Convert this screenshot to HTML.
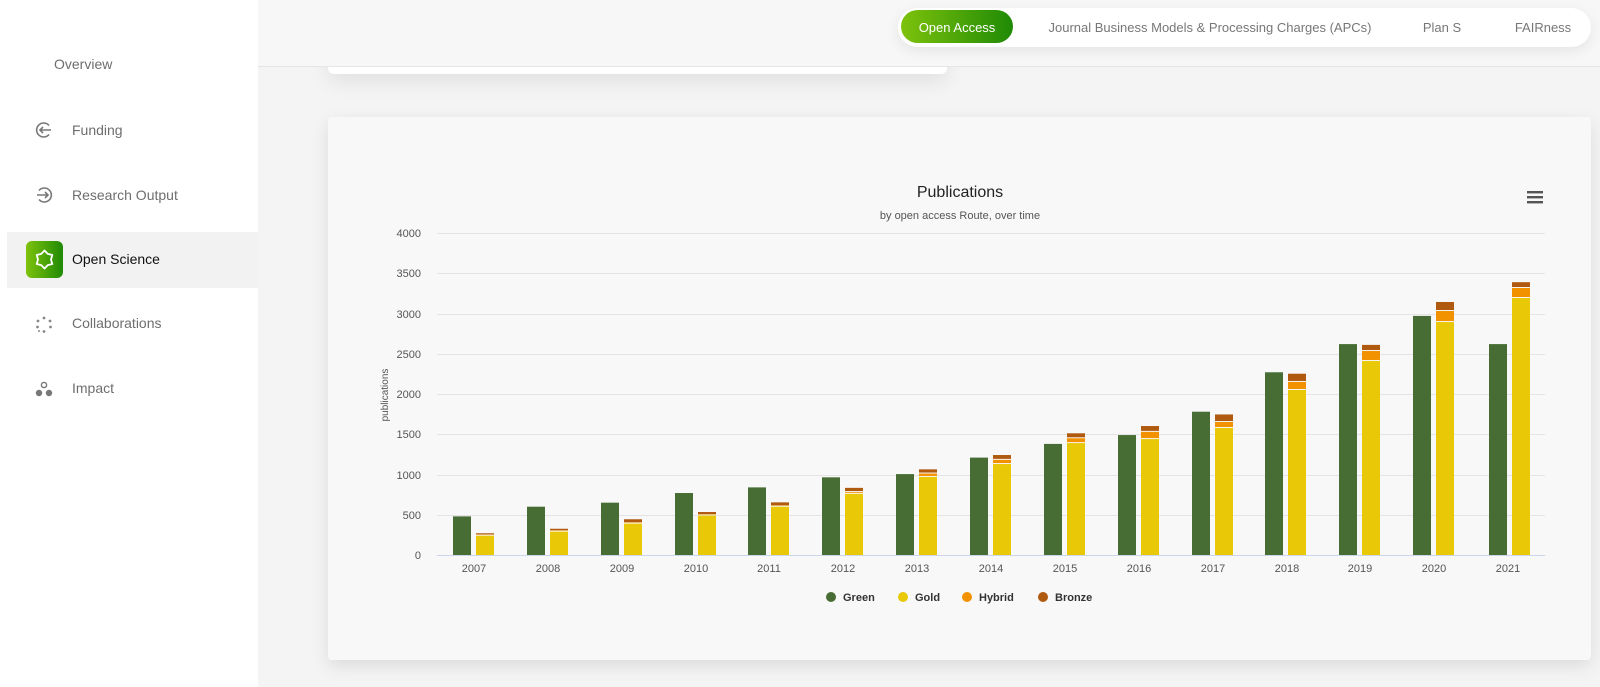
<!DOCTYPE html>
<html><head><meta charset="utf-8"><style>
*{margin:0;padding:0;box-sizing:border-box}
body{width:1600px;height:687px;overflow:hidden;background:#f4f4f4;font-family:"Liberation Sans",sans-serif;position:relative}
.side{position:absolute;left:0;top:0;width:258px;height:687px;background:#fff;z-index:3}
.item{position:absolute;left:72px;font-size:14px;color:#6e6e6e}
.ico{position:absolute;left:34px;width:20px;height:20px}
.hl{position:absolute;left:7px;top:232px;width:251px;height:56px;background:#f2f2f2}
.gicon{position:absolute;left:26px;top:241px;width:37px;height:37px;border-radius:6px;background:linear-gradient(90deg,#7ec20c,#1f8a05)}
.top{position:absolute;left:258px;top:0;width:1342px;height:67px;background:#f7f7f7;border-bottom:1px solid #e6e6e6;z-index:2}
.topcard{position:absolute;left:328px;top:0;width:619px;height:74px;background:#fff;border-radius:0 0 6px 6px;box-shadow:0 8px 20px rgba(0,0,0,.08);z-index:1}
.pill{position:absolute;left:898px;top:8px;width:693px;height:39px;background:#fff;border-radius:20px;box-shadow:0 4px 14px rgba(0,0,0,.08);z-index:3}
.pill span{position:absolute;top:12px;font-size:13px;color:#777;white-space:nowrap;transform:translateX(-50%)}
.oa{position:absolute;left:3px;top:2px;width:112px;height:33px;border-radius:17px;background:linear-gradient(90deg,#7ec20c,#1f8a05)}
.card{position:absolute;left:328px;top:117px;width:1263px;height:543px;background:#f8f8f8;border-radius:4px;box-shadow:0 6px 18px rgba(0,0,0,.1)}
</style></head><body>
<div class="top"></div>
<div class="topcard"></div>
<div class="pill">
 <div class="oa"></div>
 <span style="left:59px;color:#fff">Open Access</span>
 <span style="left:312px">Journal Business Models &amp; Processing Charges (APCs)</span>
 <span style="left:544px">Plan S</span>
 <span style="left:645px">FAIRness</span>
</div>
<div class="side">
 <div class="item" style="left:54px;top:56px">Overview</div>
 <svg class="ico" style="top:120px" viewBox="0 0 20 20" fill="none" stroke="#777" stroke-width="1.6"><path d="M15 5.5A7 7 0 1 0 15 14.5"/><path d="M17 10H6M9 7l-3 3 3 3"/></svg>
 <div class="item" style="top:122px">Funding</div>
 <svg class="ico" style="top:185px" viewBox="0 0 20 20" fill="none" stroke="#777" stroke-width="1.6"><path d="M5 5.5A7 7 0 1 1 5 14.5"/><path d="M3 10h11M11 7l3 3-3 3"/></svg>
 <div class="item" style="top:187px">Research Output</div>
 <div class="hl"></div>
 <div class="gicon"><svg width="37" height="37" viewBox="0 0 37 37" fill="none" stroke="#fff" stroke-width="1.8" stroke-linejoin="round"><path d="M18.5 9.5L21.75 12.87 26.3 14 25 18.5 26.3 23 21.75 24.13 18.5 27.5 15.25 24.13 10.7 23 12 18.5 10.7 14 15.25 12.87Z"/></svg></div>
 <div class="item" style="top:251px;color:#111">Open Science</div>
 <svg class="ico" style="top:315px" viewBox="0 0 20 20" fill="#888"><circle cx="10" cy="3" r="1.4"/><circle cx="4" cy="6" r="1.4"/><circle cx="16" cy="6" r="1.4"/><circle cx="3.5" cy="12" r="1.4"/><circle cx="16.5" cy="12" r="1.4"/><circle cx="10" cy="16.5" r="1.4"/><circle cx="5" cy="16" r="1"/></svg>
 <div class="item" style="top:315px">Collaborations</div>
 <svg class="ico" style="top:380px" viewBox="0 0 20 20"><circle cx="10" cy="5" r="2.6" fill="none" stroke="#777" stroke-width="1.4"/><circle cx="5" cy="13" r="3.2" fill="#777"/><circle cx="15" cy="13" r="3.2" fill="#777"/></svg>
 <div class="item" style="top:380px">Impact</div>
</div>
<div class="card"></div>
<svg style="position:absolute;left:0;top:0" width="1600" height="687" font-family="Liberation Sans, sans-serif">
 <text x="960" y="197" text-anchor="middle" font-size="16" fill="#222">Publications</text>
 <text x="960" y="219" text-anchor="middle" font-size="11" fill="#555">by open access Route, over time</text>
 <g fill="#555"><rect x="1527" y="191" width="16" height="2.4"/><rect x="1527" y="196" width="16" height="2.4"/><rect x="1527" y="201" width="16" height="2.4"/></g>
 <g stroke="#e4e4e4" stroke-width="1">
  <line x1="437" x2="1545" y1="233.5" y2="233.5"/><line x1="437" x2="1545" y1="273.5" y2="273.5"/><line x1="437" x2="1545" y1="314.5" y2="314.5"/><line x1="437" x2="1545" y1="354.5" y2="354.5"/><line x1="437" x2="1545" y1="394.5" y2="394.5"/><line x1="437" x2="1545" y1="434.5" y2="434.5"/><line x1="437" x2="1545" y1="475.5" y2="475.5"/><line x1="437" x2="1545" y1="515.5" y2="515.5"/>
 </g>
 <line x1="437" x2="1545" y1="555.5" y2="555.5" stroke="#ccd6eb"/>
 <g font-size="11" fill="#555" text-anchor="end">
  <text x="421" y="237">4000</text><text x="421" y="277">3500</text><text x="421" y="318">3000</text><text x="421" y="358">2500</text><text x="421" y="398">2000</text><text x="421" y="438">1500</text><text x="421" y="479">1000</text><text x="421" y="519">500</text><text x="421" y="559">0</text>
 </g>
 <text transform="translate(388,395) rotate(-90)" text-anchor="middle" font-size="10" fill="#555">publications</text>
 <g font-size="11" fill="#555" text-anchor="middle">
  <text x="474" y="572">2007</text><text x="548" y="572">2008</text><text x="622" y="572">2009</text><text x="696" y="572">2010</text><text x="769" y="572">2011</text><text x="843" y="572">2012</text><text x="917" y="572">2013</text><text x="991" y="572">2014</text><text x="1065" y="572">2015</text><text x="1139" y="572">2016</text><text x="1213" y="572">2017</text><text x="1287" y="572">2018</text><text x="1360" y="572">2019</text><text x="1434" y="572">2020</text><text x="1508" y="572">2021</text>
 </g>
 <g transform="translate(0,555) scale(1,-0.0805)">
  <g fill="#486d34">
   <rect x="453" y="0" width="18" height="480"/><rect x="527" y="0" width="18" height="600"/><rect x="601" y="0" width="18" height="650"/><rect x="675" y="0" width="18" height="770"/><rect x="748" y="0" width="18" height="840"/><rect x="822" y="0" width="18" height="965"/><rect x="896" y="0" width="18" height="1005"/><rect x="970" y="0" width="18" height="1210"/><rect x="1044" y="0" width="18" height="1380"/><rect x="1118" y="0" width="18" height="1490"/><rect x="1192" y="0" width="18" height="1780"/><rect x="1265" y="0" width="18" height="2270"/><rect x="1339" y="0" width="18" height="2620"/><rect x="1413" y="0" width="18" height="2970"/><rect x="1489" y="0" width="18" height="2620"/>
  </g>
  <g fill="#e9c808">
   <rect x="476" y="0" width="18" height="240"/><rect x="550" y="0" width="18" height="290"/><rect x="624" y="0" width="18" height="390"/><rect x="698" y="0" width="18" height="490"/><rect x="771" y="0" width="18" height="600"/><rect x="845" y="0" width="18" height="760"/><rect x="919" y="0" width="18" height="970"/><rect x="993" y="0" width="18" height="1130"/><rect x="1067" y="0" width="18" height="1390"/><rect x="1141" y="0" width="18" height="1440"/><rect x="1215" y="0" width="18" height="1578"/><rect x="1288" y="0" width="18" height="2050"/><rect x="1362" y="0" width="18" height="2410"/><rect x="1436" y="0" width="18" height="2894"/><rect x="1512" y="0" width="18" height="3193"/>
  </g>
  <g fill="#f39200">
   <rect x="476" y="252" width="18" height="4"/><rect x="550" y="302" width="18" height="6"/><rect x="624" y="402" width="18" height="6"/><rect x="698" y="502" width="18" height="6"/><rect x="771" y="612" width="18" height="6"/><rect x="845" y="772" width="18" height="10"/><rect x="919" y="982" width="18" height="30"/><rect x="993" y="1142" width="18" height="40"/><rect x="1067" y="1402" width="18" height="48"/><rect x="1141" y="1452" width="18" height="78"/><rect x="1215" y="1590" width="18" height="62"/><rect x="1288" y="2062" width="18" height="88"/><rect x="1362" y="2422" width="18" height="112"/><rect x="1436" y="2906" width="18" height="125"/><rect x="1512" y="3205" width="18" height="112"/>
  </g>
  <g fill="#b05a10">
   <rect x="476" y="256" width="18" height="14"/><rect x="550" y="308" width="18" height="18"/><rect x="624" y="408" width="18" height="36"/><rect x="698" y="508" width="18" height="26"/><rect x="771" y="618" width="18" height="36"/><rect x="845" y="794" width="18" height="40"/><rect x="919" y="1024" width="18" height="40"/><rect x="993" y="1194" width="18" height="48"/><rect x="1067" y="1462" width="18" height="50"/><rect x="1141" y="1542" width="18" height="60"/><rect x="1215" y="1664" width="18" height="82"/><rect x="1288" y="2162" width="18" height="90"/><rect x="1362" y="2546" width="18" height="64"/><rect x="1436" y="3043" width="18" height="100"/><rect x="1512" y="3329" width="18" height="60"/>
  </g>
 </g>
 <g font-size="11" font-weight="bold" fill="#333">
  <circle cx="831" cy="597" r="5" fill="#486d34"/><text x="843" y="601">Green</text>
  <circle cx="903" cy="597" r="5" fill="#e9c808"/><text x="915" y="601">Gold</text>
  <circle cx="967" cy="597" r="5" fill="#f39200"/><text x="979" y="601">Hybrid</text>
  <circle cx="1043" cy="597" r="5" fill="#b05a10"/><text x="1055" y="601">Bronze</text>
 </g>
</svg>
</body></html>
